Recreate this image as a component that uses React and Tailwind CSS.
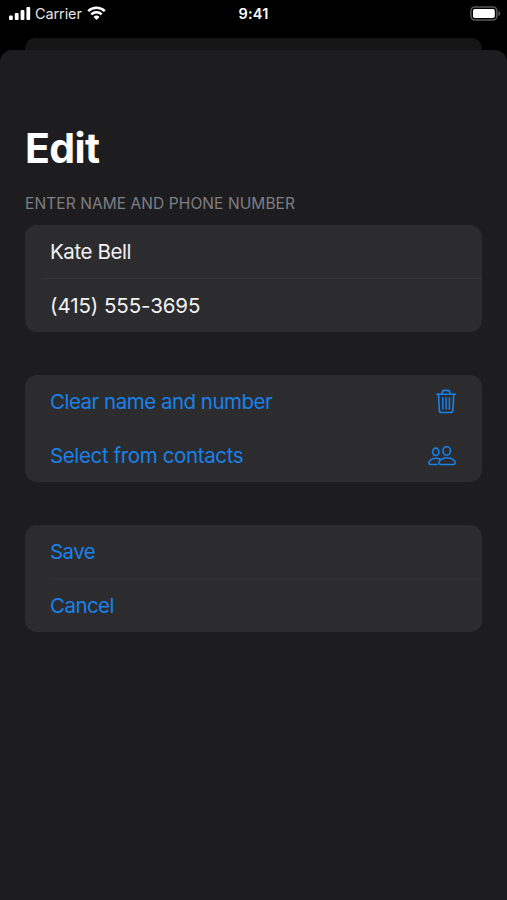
const clearRows = [
  { label: 'Clear name and number', tracking: 'tracking-[-0.5px]', icon: <TrashIcon /> },
  { label: 'Select from contacts', tracking: 'tracking-[-0.37px]', icon: <PeopleIcon /> },
]

const formRows = [{ label: 'Save' }, { label: 'Cancel' }]

export default function App() {
  return (
    <div className="h-[900px] w-[507px] overflow-hidden bg-black font-['Inter','Liberation_Sans',sans-serif] flex flex-col">
      <StatusBar />
      <div className="mx-[25px] mt-[11px] h-3 shrink-0 rounded-t-[10px] bg-[#151516]" />
      <main className="flex-1 rounded-t-[12px] bg-[#1d1d1f] px-[25px] pt-[73px]">
        <h1 className="h-[50px] text-[41px] leading-[50px] font-bold tracking-[-0.6px] text-white">Edit</h1>
        <h2 className="mt-[21px] h-5 text-[15.5px] leading-5 tracking-[0.08px] text-[#7f7f84]">
          ENTER NAME AND PHONE NUMBER
        </h2>
        <Card className="mt-[11px]">
          <Row divider="ml-[18px] bg-[#363638]">
            <span className="tracking-[-0.42px] text-[#f2f2f3]">Kate Bell</span>
          </Row>
          <Row>
            <span className="tracking-[-0.08px] text-[#f2f2f3]">(415) 555-3695</span>
          </Row>
        </Card>
        <Card className="mt-[43px]">
          {clearRows.map((r) => (
            <Row key={r.label}>
              <button className={`text-[#1881ea] ${r.tracking}`}>{r.label}</button>
              <span className="mr-[26px] text-[#1881ea]">{r.icon}</span>
            </Row>
          ))}
        </Card>
        <Card className="mt-[43px]">
          {formRows.map((r, i) => (
            <Row key={r.label} divider={i === 0 ? 'ml-[25px] bg-[#323234]' : undefined}>
              <button className="tracking-[-0.55px] text-[#1881ea]">{r.label}</button>
            </Row>
          ))}
        </Card>
      </main>
    </div>
  )
}

function StatusBar() {
  return (
    <header className="grid h-[27px] shrink-0 grid-cols-3 items-center text-white">
      <div className="flex items-center pl-[9px]">
        <svg width="22" height="13" viewBox="0 0 22 13" fill="currentColor">
          <rect x="0" y="8.5" width="3.8" height="4.5" rx="1" />
          <rect x="5.8" y="6" width="3.8" height="7" rx="1" />
          <rect x="11.6" y="3" width="3.8" height="10" rx="1" />
          <rect x="17.4" y="0" width="3.8" height="13" rx="1" />
        </svg>
        <span className="ml-1 text-[14.5px] leading-5 tracking-[-0.1px] text-[#e4e4e4]">Carrier</span>
        <svg
          className="-mt-px ml-[5px]"
          width="19"
          height="14"
          viewBox="0 0 19 14"
          fill="none"
          stroke="currentColor"
          strokeWidth="2.6"
        >
          <path d="M1.2 5.1a12 12 0 0 1 16.6 0" />
          <path d="M4.3 8.4a7.5 7.5 0 0 1 10.4 0" />
          <path d="M9.5 13.900 6.500 10.900a4.300 4.300 0 0 1 6 0Z" fill="currentColor" stroke="none" />
        </svg>
      </div>
      <div className="text-center text-[14.5px] leading-5 font-semibold tracking-[0.2px]">9:41</div>
      <div className="flex justify-end pr-[6px]">
        <svg width="31" height="15" viewBox="0 0 31 15">
          <rect x="0.9" y="0.9" width="26" height="13.2" rx="4" fill="none" stroke="#59595b" strokeWidth="1.5" />
          <rect x="3" y="3" width="21.8" height="9" rx="1.8" fill="#fff" />
          <path d="M28.4 5v5c1.1-.4 1.9-1.3 1.9-2.5S29.5 5.4 28.4 5Z" fill="#59595b" />
        </svg>
      </div>
    </header>
  )
}

function Card({ className, children }) {
  return <section className={`h-[107px] overflow-hidden rounded-[12px] bg-[#2c2c2e] ${className}`}>{children}</section>
}

function Row({ divider, children }) {
  return (
    <>
      <div className="flex h-[54px] items-center justify-between pl-[25px] text-[20.5px] leading-6">{children}</div>
      {divider && <div className={`-mt-px h-px ${divider}`} />}
    </>
  )
}

function TrashIcon() {
  return (
    <svg
      className="block"
      width="20"
      height="26"
      viewBox="0 0 20 26"
      fill="none"
      stroke="currentColor"
      strokeWidth="1.6"
      strokeLinecap="round"
      strokeLinejoin="round"
    >
      <path d="M.9 5.300h18.400" />
      <path d="M6.200 5.300V3.700c0-1.500.8-2.300 2.300-2.300h3.200c1.500 0 2.300.8 2.300 2.300v1.600" />
      <path d="M2.500 5.300l.8 15.800c.1 1.600.9 2.400 2.400 2.400h8.800c1.500 0 2.300-.8 2.400-2.400l.8-15.800" />
      <path d="M6.700 8.800l.2 11.200M10.100 8.800v11.200M13.500 8.800l-.2 11.200" strokeWidth="1.500" />
    </svg>
  )
}

function PeopleIcon() {
  return (
    <svg
      className="block"
      width="28"
      height="20"
      viewBox="0 0 28 20"
      fill="none"
      stroke="currentColor"
      strokeWidth="1.6"
      strokeLinejoin="round"
    >
      <ellipse cx="7.8" cy="5.8" rx="3.2" ry="3.7" />
      <ellipse cx="18.7" cy="5" rx="3.8" ry="4.2" />
      <path d="M19 11.700c-4.800 0-8.200 2.800-8.200 5.200 0 1.100.6 1.600 1.700 1.600h13c1.100 0 1.700-.5 1.700-1.600 0-2.400-3.400-5.200-8.200-5.200Z" />
      <path d="M9.500 18.500H2.300c-1 0-1.500-.5-1.500-1.500 0-2.300 3-4.700 7-4.700 1.900 0 3.500.5 4.700 1.300" />
    </svg>
  )
}
